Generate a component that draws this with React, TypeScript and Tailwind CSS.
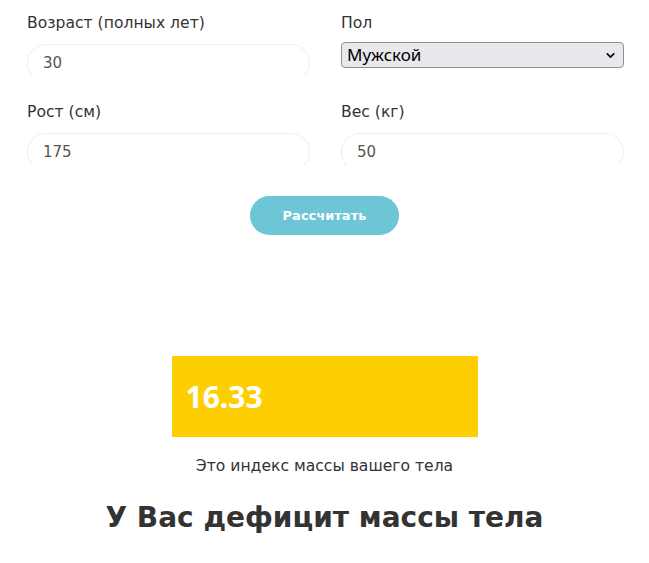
import { ChevronDown } from 'lucide-react';

const font = { fontFamily: '"DejaVu Sans", "Noto Sans", sans-serif' };

function Field({ label, value }: { label: string; value: string }) {
  return (
    <div className="flex flex-col">
      <label className="text-[15.6px] leading-[20px] text-[#333]">{label}</label>
      <div className="mt-[11px] h-[38px] rounded-[20px] border border-[#eeeeee] border-b-transparent px-[15px] flex items-center text-[15px] text-[#555]">
        {value}
      </div>
    </div>
  );
}

export default function App() {
  return (
    <div className="w-[649px] h-[563px] bg-white overflow-hidden" style={font}>
      <div className="grid grid-cols-2 gap-x-[31px] gap-y-[20px] pl-[27px] pr-[25px] pt-[13px]">
        <Field label="Возраст (полных лет)" value="30" />
        <div className="flex flex-col">
          <label className="text-[15.6px] leading-[20px] text-[#333]">Пол</label>
          <div
            className="mt-[9px] h-[26px] rounded-[4px] border border-[#8f8f9d] bg-[#e9e9ed] flex items-center justify-between pl-[5px] pr-[6px] text-[17px] text-black"
            style={{ fontFamily: '"Noto Sans", sans-serif' }}
          >
            <span>Мужской</span>
            <ChevronDown size={13} strokeWidth={3} />
          </div>
        </div>
        <Field label="Рост (см)" value="175" />
        <Field label="Вес (кг)" value="50" />
      </div>
      <div className="flex justify-center mt-[25px]">
        <button className="w-[149px] h-[39px] rounded-full bg-[#6cc6d5] text-white text-[13px] font-bold">
          Рассчитать
        </button>
      </div>
      <div className="flex flex-col items-center mt-[121px]">
        <div className="w-[306px] h-[81px] bg-[#fdcf00] flex items-center pl-[14px]">
          <span
            className="text-[30px] font-bold text-white leading-none"
            style={{ fontFamily: '"Noto Sans", sans-serif' }}
          >
            16.33
          </span>
        </div>
        <p className="mt-[18px] text-[15.6px] text-[#333]">Это индекс массы вашего тела</p>
        <h2 className="mt-[19px] text-[28px] font-bold text-[#333]">У Вас дефицит массы тела</h2>
      </div>
    </div>
  );
}
